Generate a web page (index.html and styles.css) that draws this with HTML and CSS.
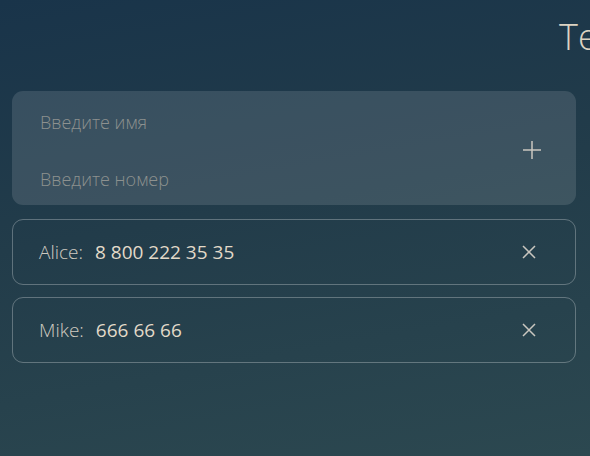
FILE: index.html
```html
<!DOCTYPE html>
<html lang="ru">
<head>
<meta charset="utf-8">
<link rel="stylesheet" href="styles.css">
</head>
<body>
<div class="page">
  <h1 class="title">Телефонная книга</h1>
  <form class="add-form">
    <div class="fields">
      <input class="field" type="text" placeholder="Введите имя">
      <input class="field" type="text" placeholder="Введите номер">
    </div>
    <button class="icon-btn add" type="button" aria-label="Добавить">
      <svg width="18" height="18" viewBox="0 0 18 18"><path d="M9 0v18M0 9h18" stroke="#c9c6bf" stroke-width="1.5" fill="none"/></svg>
    </button>
  </form>
  <ul class="list">
    <li class="contact">
      <span class="name">Alice:</span>
      <span class="phone">8 800 222 35 35</span>
      <button class="icon-btn del" type="button" aria-label="Удалить">
        <svg width="14" height="14" viewBox="0 0 14 14"><path d="M1 1l12 12M13 1L1 13" stroke="#c9c6bf" stroke-width="1.5" fill="none"/></svg>
      </button>
    </li>
    <li class="contact">
      <span class="name">Mike:</span>
      <span class="phone">666 66 66</span>
      <button class="icon-btn del" type="button" aria-label="Удалить">
        <svg width="14" height="14" viewBox="0 0 14 14"><path d="M1 1l12 12M13 1L1 13" stroke="#c9c6bf" stroke-width="1.5" fill="none"/></svg>
      </button>
    </li>
  </ul>
</div>
</body>
</html>
```
FILE: styles.css
```css
html, body {
  margin: 0;
  padding: 0;
  height: 100%;
  overflow: hidden;
}
body {
  background: linear-gradient(170deg, #19344a 0%, #223c4a 45%, #2c4850 100%);
  font-family: "Open Sans", "Noto Sans", sans-serif;
  color: #ddd6c8;
}
.page {
  padding: 0 14px 0 12px;
}
.title {
  margin: 0;
  padding: 13px 0 0 547px;
  height: 78px;
  box-sizing: border-box;
  font-size: 36px;
  font-weight: 300;
  line-height: 48px;
  color: #dcd3c2;
  white-space: nowrap;
}
.add-form {
  display: flex;
  align-items: center;
  height: 114px;
  box-sizing: border-box;
  background: rgba(255, 255, 255, 0.12);
  border-radius: 11px;
  padding: 4px 35px 0 28px;
  margin-top: 13px;
}
.fields {
  flex: 1;
  display: flex;
  flex-direction: column;
  gap: 29px;
}
.field {
  background: transparent;
  border: none;
  outline: none;
  padding: 0;
  font-family: inherit;
  font-size: 18px;
  font-weight: 300;
  height: 28px;
  color: #ddd6c8;
}
.field::placeholder {
  color: #8d918f;
}
.icon-btn {
  background: none;
  border: none;
  padding: 0;
  display: flex;
  align-items: center;
  justify-content: center;
  cursor: pointer;
}
.list {
  list-style: none;
  margin: 14px 0 0;
  padding: 0;
  display: flex;
  flex-direction: column;
  gap: 12px;
}
.contact {
  display: flex;
  align-items: center;
  height: 66px;
  box-sizing: border-box;
  border: 1px solid rgba(255, 255, 255, 0.28);
  border-radius: 11px;
  padding: 0 39px 0 26px;
  font-size: 19px;
}
.name {
  font-weight: 300;
  color: #cfcac0;
  margin-right: 12px;
}
.phone {
  flex: 1;
  color: #e2dac9;
}
```
